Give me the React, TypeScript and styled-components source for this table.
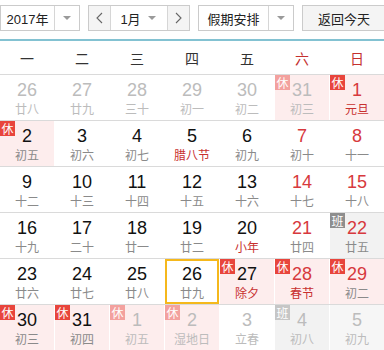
import styled, { createGlobalStyle, css } from 'styled-components'

/*---> Data <---*/
type Cell = {
  d: number
  l: string
  other?: boolean
  red?: boolean
  fest?: boolean
  badge?: 'rest' | 'work'
  bg?: 'rest' | 'work' | 'soft'
  today?: boolean
}

const WEEK = ['一', '二', '三', '四', '五', '六', '日']

const ROWS: Cell[][] = [
  [
    { d: 26, l: '廿八', other: true },
    { d: 27, l: '廿九', other: true },
    { d: 28, l: '三十', other: true },
    { d: 29, l: '初一', other: true },
    { d: 30, l: '初二', other: true },
    { d: 31, l: '初三', other: true, badge: 'rest', bg: 'rest' },
    { d: 1, l: '元旦', red: true, fest: true, badge: 'rest', bg: 'rest' },
  ],
  [
    { d: 2, l: '初五', badge: 'rest', bg: 'rest' },
    { d: 3, l: '初六' },
    { d: 4, l: '初七' },
    { d: 5, l: '腊八节', fest: true },
    { d: 6, l: '初九' },
    { d: 7, l: '初十', red: true },
    { d: 8, l: '十一', red: true },
  ],
  [
    { d: 9, l: '十二' },
    { d: 10, l: '十三' },
    { d: 11, l: '十四' },
    { d: 12, l: '十五' },
    { d: 13, l: '十六' },
    { d: 14, l: '十七', red: true },
    { d: 15, l: '十八', red: true },
  ],
  [
    { d: 16, l: '十九' },
    { d: 17, l: '二十' },
    { d: 18, l: '廿一' },
    { d: 19, l: '廿二' },
    { d: 20, l: '小年', fest: true },
    { d: 21, l: '廿四', red: true },
    { d: 22, l: '廿五', red: true, badge: 'work', bg: 'work' },
  ],
  [
    { d: 23, l: '廿六' },
    { d: 24, l: '廿七' },
    { d: 25, l: '廿八' },
    { d: 26, l: '廿九', today: true },
    { d: 27, l: '除夕', fest: true, badge: 'rest', bg: 'rest' },
    { d: 28, l: '春节', red: true, fest: true, badge: 'rest', bg: 'rest' },
    { d: 29, l: '初二', red: true, badge: 'rest', bg: 'rest' },
  ],
  [
    { d: 30, l: '初三', badge: 'rest', bg: 'rest' },
    { d: 31, l: '初四', badge: 'rest', bg: 'rest' },
    { d: 1, l: '初五', other: true, badge: 'rest', bg: 'rest' },
    { d: 2, l: '湿地日', other: true, badge: 'rest', bg: 'rest' },
    { d: 3, l: '立春', other: true },
    { d: 4, l: '初八', other: true, badge: 'work', bg: 'work' },
    { d: 5, l: '初九', other: true, bg: 'soft' },
  ],
]

/*---> Components <---*/
const Arrow = () => <Caret />

const Chevron = ({ dir }: { dir: 'left' | 'right' }) => (
  <svg width='7' height='12' viewBox='0 0 7 12'>
    <polyline
      points={dir === 'left' ? '6,1 1,6 6,11' : '1,1 6,6 1,11'}
      fill='none'
      stroke='#666'
      strokeWidth='1.1'
    />
  </svg>
)

const App = () => {
  return (
    <Page>
      <GlobalStyle />
      <Toolbar>
        <Select $width={80}>
          <SelectText>2017年</SelectText>
          <SelectArrow>
            <Arrow />
          </SelectArrow>
        </Select>
        <MonthGroup>
          <NavButton>
            <Chevron dir='left' />
          </NavButton>
          <MonthSelect>
            <SelectText>1月</SelectText>
            <Arrow />
          </MonthSelect>
          <NavButton>
            <Chevron dir='right' />
          </NavButton>
        </MonthGroup>
        <Select $width={96}>
          <SelectText>假期安排</SelectText>
          <SelectArrow>
            <Arrow />
          </SelectArrow>
        </Select>
        <TodayButton>返回今天</TodayButton>
      </Toolbar>
      <WeekHeader>
        {WEEK.map((w, i) => (
          <WeekDay key={w} $weekend={i > 4}>
            {w}
          </WeekDay>
        ))}
      </WeekHeader>
      {ROWS.map((row, r) => (
        <Row key={r}>
          {row.map((c, i) => (
            <DayCell key={i} $bg={c.bg} $today={c.today}>
              {c.badge && (
                <Badge $kind={c.badge} $faded={c.other}>
                  {c.badge === 'rest' ? '休' : '班'}
                </Badge>
              )}
              <DayNum $other={c.other} $red={c.red}>
                {c.d}
              </DayNum>
              <Lunar $other={c.other} $fest={c.fest}>
                {c.l}
              </Lunar>
            </DayCell>
          ))}
        </Row>
      ))}
    </Page>
  )
}

/*---> Styles <---*/
const GlobalStyle = createGlobalStyle`
  html, body {
    margin: 0;
    padding: 0;
    background: #fff;
    overflow: hidden;
  }
  body {
    font-family: "Liberation Sans", "Noto Sans CJK SC", sans-serif;
  }
`

const cjk = `"Noto Sans CJK SC", "Liberation Sans", sans-serif`

const Page = styled.div`
  width: 384px;
  height: 350px;
  overflow: hidden;
`

const Toolbar = styled.div`
  height: 41px;
  box-sizing: border-box;
  padding-top: 5px;
  display: flex;
  align-items: flex-start;
  border-bottom: 2px solid #83c2d2;
`

const Select = styled.div<{ $width: number }>`
  width: ${(p) => p.$width}px;
  height: 26px;
  box-sizing: border-box;
  border: 1px solid #cbcbcb;
  background: #fff;
  display: flex;
  align-items: center;
  margin-right: 8px;
  flex-shrink: 0;
`

const SelectText = styled.span`
  flex: 1;
  text-align: center;
  font-size: 13px;
  color: #222;
  font-family: "Liberation Sans", "Noto Sans CJK SC", sans-serif;
`

const SelectArrow = styled.div`
  width: 24px;
  height: 100%;
  border-left: 1px solid #d6d6d6;
  display: flex;
  align-items: center;
  justify-content: center;
`

const Caret = styled.span`
  width: 0;
  height: 0;
  border-left: 4px solid transparent;
  border-right: 4px solid transparent;
  border-top: 4px solid #9a9a9a;
`

const MonthGroup = styled.div`
  height: 26px;
  box-sizing: border-box;
  border: 1px solid #cbcbcb;
  display: flex;
  margin-right: 8px;
  flex-shrink: 0;
`

const NavButton = styled.div`
  width: 21px;
  height: 100%;
  background: #f4f4f4;
  display: flex;
  align-items: center;
  justify-content: center;
`

const MonthSelect = styled.div`
  width: 58px;
  height: 100%;
  background: #fff;
  border-left: 1px solid #d6d6d6;
  border-right: 1px solid #d6d6d6;
  display: flex;
  align-items: center;
  padding-right: 11px;
  padding-left: 2px;
  box-sizing: border-box;
`

const TodayButton = styled.div`
  width: 90px;
  height: 26px;
  box-sizing: border-box;
  border: 1px solid #cbcbcb;
  background: #f4f4f4;
  font-family: ${cjk};
  font-size: 13px;
  color: #222;
  display: flex;
  align-items: center;
  padding-left: 15px;
  flex-shrink: 0;
`

const WeekHeader = styled.div`
  height: 34px;
  box-sizing: border-box;
  display: grid;
  grid-template-columns: repeat(7, 54px);
  column-gap: 1px;
  border-bottom: 1px solid #dadada;
`

const WeekDay = styled.div<{ $weekend: boolean }>`
  display: flex;
  align-items: center;
  justify-content: center;
  font-family: ${cjk};
  font-size: 14px;
  color: ${(p) => (p.$weekend ? '#c4302f' : '#333')};
`

const Row = styled.div`
  height: 46px;
  box-sizing: border-box;
  display: grid;
  grid-template-columns: repeat(7, 54px);
  column-gap: 1px;
  border-bottom: 1px solid #dadada;
`

const DayCell = styled.div<{ $bg?: string; $today?: boolean }>`
  position: relative;
  display: flex;
  flex-direction: column;
  align-items: center;
  padding-top: 5px;
  box-sizing: border-box;
  background: ${(p) =>
    p.$bg === 'rest'
      ? '#fdeded'
      : p.$bg === 'work'
      ? '#f2f2f2'
      : p.$bg === 'soft'
      ? '#f6f6f6'
      : '#fff'};
  ${(p) =>
    p.$today &&
    css`
      box-shadow: inset 0 0 0 2px #f5b81c;
    `}
`

const Badge = styled.span<{ $kind: 'rest' | 'work'; $faded?: boolean }>`
  position: absolute;
  top: 0;
  left: 0;
  width: 15px;
  height: 15px;
  line-height: 15px;
  text-align: center;
  font-family: ${cjk};
  font-size: 12px;
  color: #fff;
  background: ${(p) =>
    p.$kind === 'rest'
      ? p.$faded
        ? '#f3a19e'
        : '#e8453c'
      : p.$faded
      ? '#c6c6c6'
      : '#8e8e8e'};
`

const DayNum = styled.div<{ $other?: boolean; $red?: boolean }>`
  font-family: "Liberation Sans", sans-serif;
  font-size: 18px;
  line-height: 20px;
  height: 20px;
  color: ${(p) => (p.$other ? '#bcbcbc' : p.$red ? '#d7393d' : '#111')};
`

const Lunar = styled.div<{ $other?: boolean; $fest?: boolean }>`
  font-family: ${cjk};
  font-size: 12px;
  line-height: 18px;
  color: ${(p) => (p.$other ? '#bcbcbc' : p.$fest ? '#c8302f' : '#8a8a8a')};
`

export default App
